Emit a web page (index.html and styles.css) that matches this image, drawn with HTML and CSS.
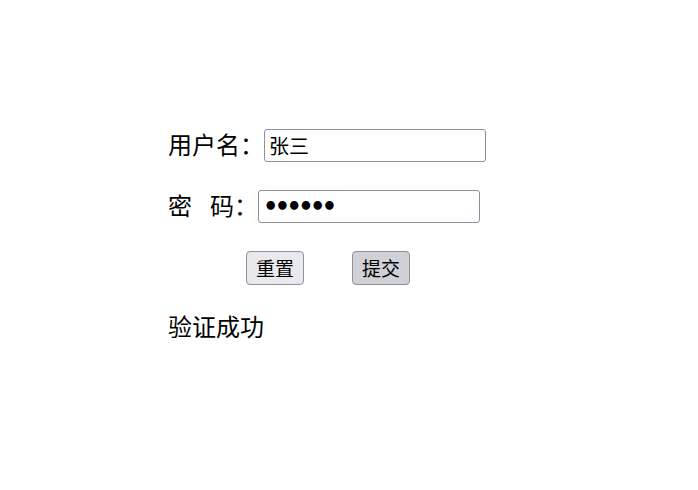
FILE: index.html
```html
<!DOCTYPE html>
<html lang="zh-CN">
<head>
    <meta charset="UTF-8">
    <title>登录</title>
    <link rel="stylesheet" href="styles.css">
</head>
<body>
    <div class="container">
        <form class="login-form">
            <div class="form-row">
                <label for="username">用户名：</label>
                <input type="text" id="username" value="张三">
            </div>
            <div class="form-row">
                <label for="password"><span class="gap">密</span>码：</label>
                <input type="password" id="password" class="pwd" value="123456">
            </div>
            <div class="form-row btn-row">
                <button type="reset" class="btn">重置</button>
                <button type="button" class="btn btn-submit">提交</button>
            </div>
            <div class="result">验证成功</div>
        </form>
    </div>
</body>
</html>
```

FILE: styles.css
```css
body {
    margin: 0;
    font-family: "Noto Sans CJK SC", sans-serif;
    color: #000;
    background: #fff;
}
.container {
    padding: 129px 0 0 168px;
}
.login-form {
    display: flex;
    flex-direction: column;
    gap: 28px;
}
.form-row {
    display: flex;
    align-items: center;
    height: 33px;
}
.form-row label {
    font-size: 24px;
    line-height: 29px;
    padding-bottom: 4px;
    display: flex;
}
.gap {
    margin-right: 18px;
}
.form-row input {
    box-sizing: border-box;
    width: 222px;
    height: 33px;
    padding: 0 4px;
    border: 1px solid #8f8f9d;
    border-radius: 3px;
    font-family: "Noto Sans CJK SC", sans-serif;
    font-size: 20px;
    color: #000;
}
.form-row .pwd {
    font-family: "DejaVu Sans", sans-serif;
    font-size: 24px;
    font-weight: bold;
    letter-spacing: -3.6px;
}
.btn-row {
    padding-left: 78px;
    gap: 48px;
}
.btn {
    box-sizing: border-box;
    height: 34px;
    width: 58px;
    padding: 0;
    border: 1px solid #8f8f9d;
    border-radius: 4px;
    background: #e9e9ed;
    font-family: "Noto Sans CJK SC", sans-serif;
    font-size: 19px;
    color: #000;
}
.btn-submit {
    background: #d0d0d7;
}
.result {
    margin-top: -1px;
    font-size: 24px;
    line-height: 29px;
}
```
